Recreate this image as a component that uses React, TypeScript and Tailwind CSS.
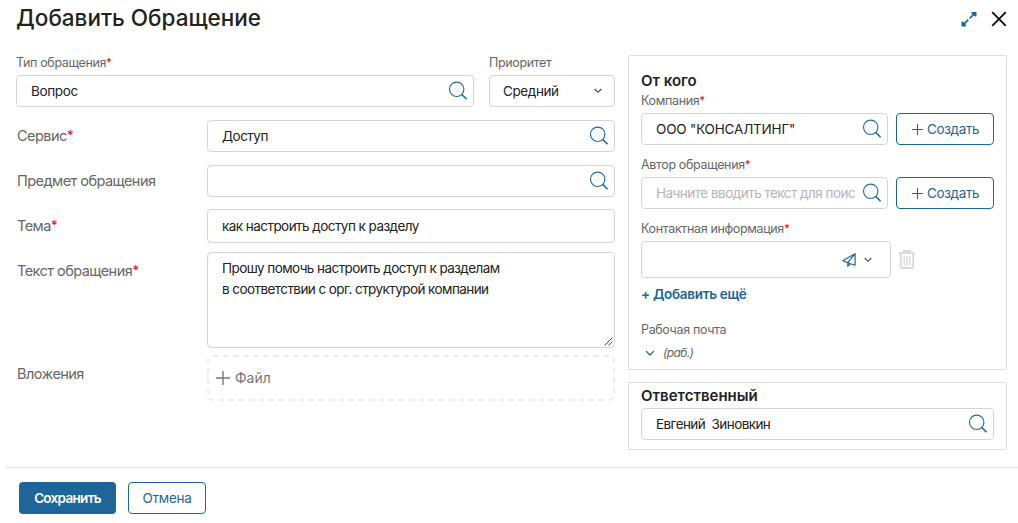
import type { ReactNode } from "react";

const SearchIcon = () => (
  <svg width="20" height="20" viewBox="0 0 20 20" fill="none" stroke="#1e6aa3" className="shrink-0">
    <circle cx="8.7" cy="8.3" r="7.2" strokeWidth="1.15" />
    <path d="M13.6 13.2L18.6 18.2" strokeWidth="1.6" />
  </svg>
);

const Chevron = ({ className }: { className: string }) => (
  <svg width="8" height="6" viewBox="0 0 8 6" fill="none" stroke="currentColor" strokeWidth="1.1" className={className}>
    <path d="M0.7 1L4 4.3L7.3 1" />
  </svg>
);

const Plus = ({ className }: { className: string }) => (
  <svg viewBox="0 0 14 14" fill="none" stroke="currentColor" strokeWidth="1.4" className={className}>
    <path d="M7 0V14M0 7H14" />
  </svg>
);

const Star = ({ className = "text-[11px]" }: { className?: string }) => (
  <span className={`align-[1px] leading-none font-semibold text-[#ee2222] ${className}`}>*</span>
);

const SmallLabel = ({ children, className = "" }: { children: ReactNode; className?: string }) => (
  <div className={`h-4 whitespace-nowrap text-[12.5px] leading-4 tracking-[-0.35px] text-[#666] ${className}`}>{children}</div>
);

const Box = ({ children, className }: { children?: ReactNode; className: string }) => (
  <div className={`flex items-center rounded border border-[#d5d5d5] bg-white whitespace-nowrap text-[13.5px] text-[#222] ${className}`}>{children}</div>
);

const Row = ({ label, required, className, labelClass = "", children }: { label: string; required?: boolean; className: string; labelClass?: string; children: ReactNode }) => (
  <div className={`flex ${className}`}>
    <div className={`w-[191px] shrink-0 pl-px text-[14.5px] leading-8 tracking-[-0.55px] text-[#666] ${labelClass}`}>
      {label}
      {required && <Star className="text-[13px]" />}
    </div>
    {children}
  </div>
);

const CreateButton = () => (
  <button className="flex h-8 w-[98px] items-center rounded border border-[#1e659a] pl-[15px] text-[13.5px] tracking-[-0.35px] text-[#1e659a]">
    <Plus className="mr-[4px] h-[11px] w-[11px]" />
    Создать
  </button>
);

export default function App() {
  return (
    <div className="h-[523px] w-[1018px] overflow-hidden bg-white font-['Inter',sans-serif]">
      <header className="flex h-[55px] justify-between pl-4 pr-[11px]">
        <h1 className="mt-[3px] h-[30px] whitespace-nowrap text-[22.5px] leading-[30px] font-medium text-[#222]">Добавить Обращение</h1>
        <div className="flex pt-[11px]">
          <svg width="16" height="16" viewBox="0 0 16 16" fill="#1e659a" stroke="#1e659a">
            <path d="M10.5 1H15.5V5.5H14L10.5 2.5ZM0.5 10.5V15.5H5V14L2 10.5Z" stroke="none" />
            <path d="M2.5 13.5L7.3 8.7M8.7 7.3L13.5 2.5" strokeWidth="1.7" />
          </svg>
          <svg width="16" height="16" viewBox="0 0 16 16" fill="none" stroke="#111" strokeWidth="1.9" className="ml-[14px]">
            <path d="M1.2 1.2L14.8 14.8M14.8 1.2L1.2 14.8" />
          </svg>
        </div>
      </header>

      <main className="flex h-[412px] gap-[13px] pl-4">
        <section className="w-[599px]">
          <div className="flex gap-[15px]">
            <div className="w-[458px]">
              <SmallLabel className="mb-1">Тип обращения<Star /></SmallLabel>
              <Box className="h-8 justify-between pl-[14px] pr-[5px]">
                <span className="tracking-[-0.35px]">Вопрос</span>
                <SearchIcon />
              </Box>
            </div>
            <div className="w-[126px]">
              <SmallLabel className="mb-1">Приоритет</SmallLabel>
              <Box className="h-8 justify-between pl-[13px] pr-3">
                <span className="tracking-[-0.4px]">Средний</span>
                <Chevron className="text-[#3b3f7b]" />
              </Box>
            </div>
          </div>
          <Row label="Сервис" required className="mt-[13px]">
            <Box className="h-8 w-[408px] justify-between pl-[14px] pr-[5px]"><span className="tracking-[-0.5px]">Доступ</span><SearchIcon /></Box>
          </Row>
          <Row label="Предмет обращения" className="mt-[13px]">
            <Box className="h-8 w-[408px] justify-end pr-[5px]"><SearchIcon /></Box>
          </Row>
          <Row label="Тема" required className="mt-3" labelClass="pt-px">
            <Box className="h-[34px] w-[408px] pl-[14px]"><span className="tracking-[-0.55px]">как настроить доступ к разделу</span></Box>
          </Row>
          <Row label="Текст обращения" required className="mt-[9px]" labelClass="pt-[3px]">
            <Box className="relative h-24 w-[408px] items-start pl-[14px] pt-[5px] leading-[21px] tracking-[-0.57px]">
              <div>Прошу помочь настроить доступ к разделам<br />в соответствии с орг. структурой компании</div>
              <svg width="9" height="9" viewBox="0 0 9 9" stroke="#444" fill="none" className="absolute right-px bottom-px">
                <path d="M0.5 8.5L8.5 0.5M4.5 8.5L8.5 4.5" />
              </svg>
            </Box>
          </Row>
          <Row label="Вложения" className="mt-[7px]" labelClass="pt-[3px]">
            <div className="flex h-[46px] w-[408px] items-center rounded-md border-2 border-dashed border-[#eee] pl-[7px] text-sm text-[#777]">
              <Plus className="mr-[5px] h-[14px] w-[14px]" />
              Файл
            </div>
          </Row>
        </section>

        <aside className="w-[379px]">
          <div className="h-[315px] rounded-xs border border-[#ddd] px-3 pt-[15px]">
            <h2 className="h-[22px] text-[15px] leading-[19px] font-semibold text-[#222]">От кого</h2>
            <SmallLabel className="mb-1">Компания<Star /></SmallLabel>
            <div className="flex gap-2">
              <Box className="h-8 w-[247px] justify-between pl-[14px] pr-[5px]"><span className="tracking-[-0.18px]">ООО "КОНСАЛТИНГ"</span><SearchIcon /></Box>
              <CreateButton />
            </div>
            <SmallLabel className="mt-3 mb-1">Автор обращения<Star /></SmallLabel>
            <div className="flex gap-2">
              <Box className="h-8 w-[247px] justify-between pl-[14px] pr-[5px]">
                <span className="tracking-[-0.52px] text-[#b5b5b5]">Начните вводить текст для поис</span>
                <SearchIcon />
              </Box>
              <CreateButton />
            </div>
            <SmallLabel className="mt-3 mb-1">Контактная информация<Star /></SmallLabel>
            <div className="flex items-center">
              <Box className="h-[37px] w-[250px] justify-end pr-[18px]">
                <svg width="14" height="14" viewBox="0 0 14 14" fill="none" stroke="#1e659a" strokeWidth="1.2" strokeLinejoin="round" className="mr-2">
                  <path d="M0.7 7.8L13.1 0.7V12.2L8.2 10.7L5.8 13.3V9.6L0.7 7.8Z" />
                  <path d="M5.8 9.6L12.6 1.4M5.8 9.6L8.2 10.7" />
                </svg>
                <Chevron className="text-[#3b3f7b]" />
              </Box>
              <svg width="16" height="19" viewBox="0 0 16 19" fill="none" stroke="#d8d8d8" className="ml-2">
                <path d="M0 3H16" strokeWidth="1.8" />
                <path d="M5 2.5V1H11V2.5M1.8 3V16.5Q1.8 18 3.3 18H12.7Q14.2 18 14.2 16.5V3" strokeWidth="1.8" />
                <path d="M5.2 6V15.5M8 6V15.5M10.8 6V15.5" strokeWidth="1.4" />
              </svg>
            </div>
            <div className="mt-[7px] h-[19px] text-[13.5px] leading-[18px] font-semibold tracking-[-0.3px] text-[#1e659a]">+ Добавить ещё</div>
            <SmallLabel className="mt-[18px]">Рабочая почта</SmallLabel>
            <div className="mt-[7px] flex h-4 items-center pl-1 text-xs tracking-[-0.65px] text-[#666] italic">
              <Chevron className="mr-2 h-[7px] w-[10px] text-[#1e659a]" />
              (раб.)
            </div>
          </div>
          <div className="mt-3 h-[68px] rounded-xs border border-[#ddd] px-3 pt-[3px]">
            <h2 className="h-[22px] text-[15px] leading-[19px] font-semibold text-[#222]">Ответственный</h2>
            <Box className="h-8 justify-between pl-[14px] pr-[5px]"><span className="tracking-[-0.58px]">Евгений&nbsp; Зиновкин</span><SearchIcon /></Box>
          </div>
        </aside>
      </main>

      <footer className="ml-[5px] flex h-14 gap-3 border-t border-[#e4e4e4] pt-[14px] pl-[14px] text-[13.5px]">
        <button className="h-8 w-[97px] rounded bg-[#1e659a] font-semibold tracking-[-0.7px] text-white">Сохранить</button>
        <button className="h-8 w-[78px] rounded border border-[#1e659a] tracking-[-0.3px] text-[#1e659a]">Отмена</button>
      </footer>
    </div>
  );
}
